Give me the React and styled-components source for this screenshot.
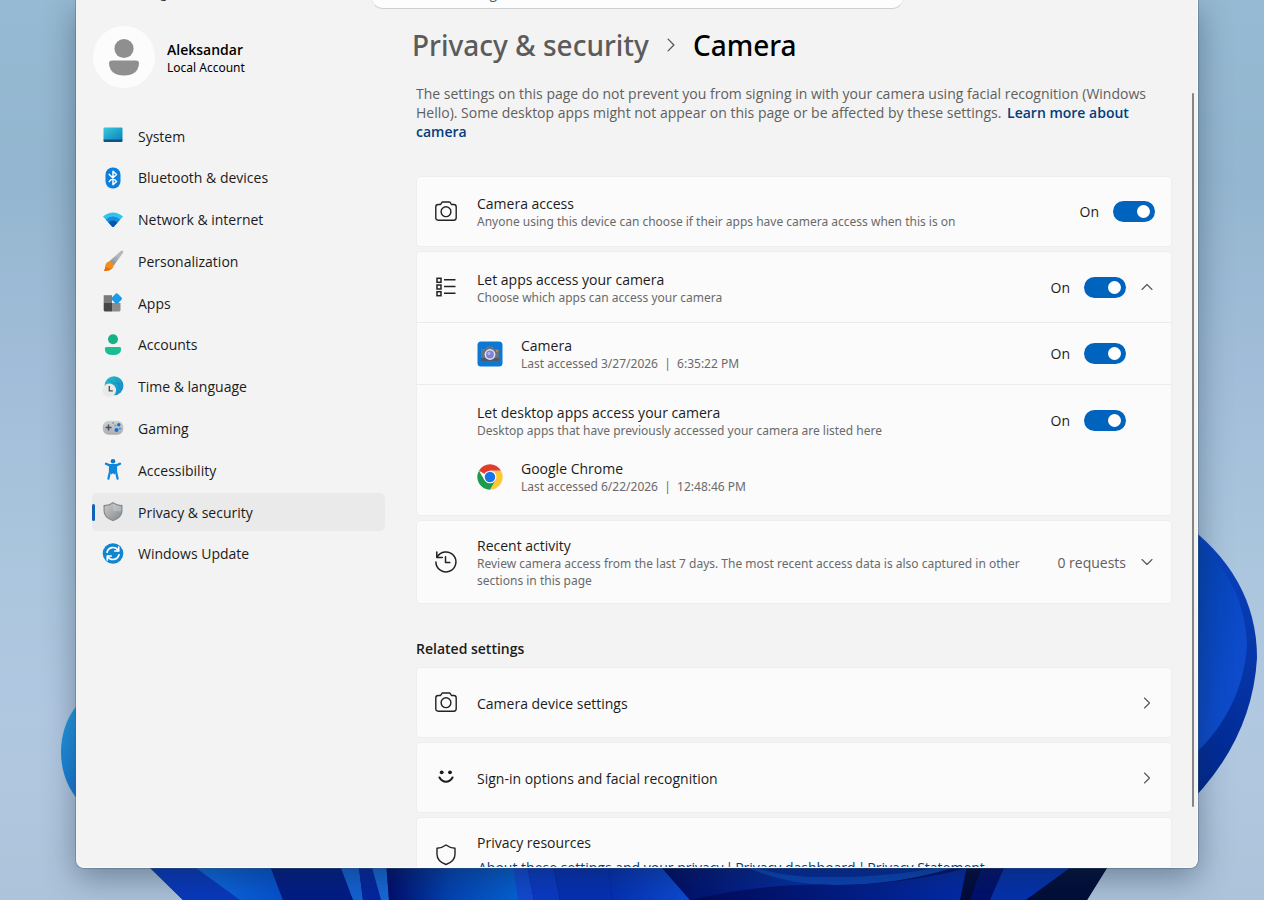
import React from 'react';
import styled, { createGlobalStyle } from 'styled-components';

const GlobalStyle = createGlobalStyle`
  *, *::before, *::after { box-sizing: border-box; }
  body {
    margin: 0;
    font-family: "Open Sans", "Noto Sans", sans-serif;
    font-size: 14px;
    line-height: 20px;
    color: #1b1b1b;
  }
  h1, h2, p, ul { margin: 0; padding: 0; }
  ul { list-style: none; }
  svg { display: block; flex: none; }
`;

const Desktop = styled.div`
  position: relative;
  height: 100vh;
  padding: 0 66px 32px 76px;
  overflow: hidden;
  background: linear-gradient(180deg, #96bad3 0%, #94b6d0 20%, #a2bdd9 42%, #a9c5dc 60%, #b1c8e1 80%, #adc3da 100%);
`;

const Wallpaper = styled.svg`
  position: absolute;
  inset: 0;
  width: 100%;
  height: 100%;
`;

const Window = styled.div`
  position: relative;
  display: flex;
  flex-direction: column;
  height: 100%;
  overflow: hidden;
  background: #f3f3f3;
  border: solid #fbfbfb;
  border-width: 0 1px 1px 0;
  border-radius: 0 0 8px 8px;
  box-shadow: 0 0 0 1px rgba(70, 90, 110, 0.35), 0 10px 32px rgba(20, 40, 60, 0.42);
`;

const TitleBar = styled.header`
  display: flex;
  align-items: flex-end;
  flex: none;
  height: 9px;
  overflow: hidden;
`;

const AppName = styled.span`
  width: 295px;
  flex: none;
  padding-left: 52px;
  margin-bottom: 5px;
  font-size: 12px;
`;

const SearchBox = styled.input`
  flex: 0 1 533px;
  min-width: 0;
  height: 34px;
  padding: 0 38px;
  border: 1px solid #e8e8e8;
  border-bottom: 1px solid #cfcfcf;
  border-radius: 12px;
  background: #fdfdfd;
  font: inherit;
  &::placeholder { color: #5c5c5c; opacity: 1; }
`;

const Body = styled.div`
  display: flex;
  flex: 1;
  min-height: 0;
`;

const Sidebar = styled.aside`
  flex: none;
  width: 336px;
  padding: 17px 27px 0 16px;
`;

const Profile = styled.div`
  display: flex;
  align-items: center;
  gap: 12px;
  margin: 0 0 29px 1px;
`;

const Avatar = styled.div`
  display: grid;
  place-items: center;
  width: 62px;
  height: 62px;
  border-radius: 50%;
  background: #fcfcfc;
`;

const ProfileText = styled.div`
  padding-top: 4px;
  line-height: 18px;
  color: #000;
`;

const ProfileName = styled.div`
  font-weight: 600;
`;

const ProfileKind = styled.div`
  font-family: "Noto Sans", sans-serif;
  font-size: 12px;
`;

const NavList = styled.ul`
  display: flex;
  flex-direction: column;
  justify-content: space-between;
  min-height: 456px;
`;

const NavLink = styled.a`
  position: relative;
  display: flex;
  align-items: center;
  gap: 15px;
  height: 38px;
  padding-left: 11px;
  border-radius: 5px;
  color: #1b1b1b;
  text-decoration: none;
  background: ${(p) => (p.$current ? '#eaeaea' : 'transparent')};
  &::before {
    content: "";
    display: ${(p) => (p.$current ? 'block' : 'none')};
    position: absolute;
    left: 0;
    width: 3px;
    height: 17px;
    border-radius: 2px;
    background: #0f63bd;
  }
`;

const NavLabel = styled.span`
  padding-top: 1px;
`;

const Main = styled.main`
  flex: 1;
  min-width: 0;
  padding: 16px 0 0 4px;
  overflow-y: auto;
  scrollbar-width: none;
`;

const ScrollTrack = styled.div`
  display: flex;
  justify-content: flex-end;
  flex: none;
  width: 25px;
  padding: 84px 3px 60px 0;
`;

const ScrollThumb = styled.div`
  width: 2px;
  border-radius: 1px;
  background: #858585;
`;

const Breadcrumb = styled.h1`
  display: flex;
  align-items: center;
  gap: 15px;
  margin: 0 0 19px -4px;
  font: 500 28px/40px "Noto Sans", sans-serif;
  color: #000;
`;

const Crumb = styled.a`
  color: #5b5b5b;
  text-decoration: none;
`;

const Intro = styled.p`
  margin-bottom: 35px;
  line-height: 19px;
  color: #5f5f5f;
`;

const LearnMore = styled.a`
  margin-left: 2px;
  font-weight: 600;
  color: #003e7e;
  text-decoration: none;
`;

const CardStack = styled.section`
  display: flex;
  flex-direction: column;
  gap: 4px;
`;

const Card = styled.div`
  border: 1px solid #eeeeee;
  border-radius: 4px;
  background: #fbfbfb;
`;

const Row = styled.div`
  display: flex;
  align-items: center;
  gap: 20px;
  width: 100%;
  min-height: ${(p) => p.$height || 69}px;
  padding: 0 ${(p) => p.$end || 18}px 0 18px;
`;

const LinkRow = styled(Row).attrs({ as: 'a' })`
  color: inherit;
  text-decoration: none;
`;

const ResourceRow = styled(Row)`
  padding-top: 14px;
  padding-bottom: 14px;
`;

const NestedRow = styled.div`
  display: flex;
  align-items: center;
  gap: 18px;
  min-height: ${(p) => p.$height || 37}px;
  padding: 0 45px 0 60px;
`;

const Section = styled.div`
  border-top: 1px solid #ebebeb;
`;

const DesktopApps = styled(Section)`
  display: flex;
  flex-direction: column;
  gap: 19px;
  padding: 17px 0 20px;
`;

const Text = styled.div`
  flex: 1;
  min-width: 0;
  padding-top: 2px;
`;

const Title = styled.div`
  line-height: 18px;
`;

const Detail = styled.div`
  font: 12px/17px "Noto Sans", sans-serif;
  color: #6a6a6a;
`;

const SwitchLabel = styled.label`
  display: flex;
  align-items: center;
  gap: 14px;
`;

const SwitchText = styled.span`
  padding-top: 1px;
`;

const SwitchInput = styled.input`
  appearance: none;
  display: flex;
  align-items: center;
  justify-content: ${(p) => (p.checked ? 'flex-end' : 'flex-start')};
  width: 42px;
  height: 21px;
  margin: 0;
  padding: 0 5px;
  border-radius: 11px;
  background: ${(p) => (p.checked ? '#0063bd' : '#8a8a8a')};
  &::before {
    content: "";
    width: 13px;
    height: 13px;
    border-radius: 50%;
    background: #fff;
  }
`;

const Trailing = styled.div`
  display: flex;
  align-items: center;
  gap: 15px;
`;

const RequestCount = styled.span`
  padding-top: 2px;
  color: #5f5f5f;
`;

const IconButton = styled.button`
  display: block;
  padding: 0;
  border: 0;
  background: none;
  color: inherit;
`;

const GroupHeading = styled.h2`
  margin: 35px 0 8px;
  font-size: 14px;
  font-weight: 600;
  line-height: 20px;
`;

const ResourceLinks = styled.div`
  display: flex;
  gap: 2px;
  margin-top: 6px;
  padding-left: 1px;
  color: #003e7e;
`;

const ResourceLink = styled.a`
  color: #003e7e;
  text-decoration: none;
`;

function Icon({ size = 22, children, ...rest }) {
  return (
    <svg width={size} height={size} viewBox={`0 0 ${size} ${size}`} fill="none" overflow="visible" aria-hidden="true" {...rest}>
      {children}
    </svg>
  );
}

const chevrons = {
  up: 'M1 8.500 L6 3.500 L11 8.500',
  down: 'M1 3.500 L6 8.500 L11 3.500',
  right: 'M3.500 1 L8.500 6 L3.500 11',
};

const Chevron = ({ to, size = 12, width = 1.1 }) => (
  <svg width={size} height={size} viewBox="0 0 12 12" fill="none" aria-hidden="true">
    <path d={chevrons[to]} stroke="#555" strokeWidth={width} strokeLinecap="round" strokeLinejoin="round" />
  </svg>
);

const CameraIcon = () => (
  <Icon stroke="#222" strokeWidth="1.4" strokeLinejoin="round">
    <path d="M3.200 3.500H5.600L6.700 1.700Q7.100 1 7.900 1H14.100Q14.900 1 15.300 1.700L16.400 3.500H18.800Q21.200 3.500 21.200 5.900V16.800Q21.200 19.200 18.800 19.200H3.200Q.8 19.200 .8 16.800V5.900Q.8 3.500 3.200 3.500Z" />
    <circle cx="11" cy="10.700" r="4.900" />
  </Icon>
);

const ListIcon = () => (
  <Icon stroke="#222" strokeWidth="1.5">
    <rect x="2" y="2.300" width="4" height="4" />
    <rect x="2" y="9" width="4" height="4" />
    <rect x="2" y="15.700" width="4" height="4" />
    <path d="M9 3.800H20.500M9 10.500H20.500M9 17.200H20.500" />
  </Icon>
);

const HistoryIcon = () => (
  <Icon stroke="#222" strokeWidth="1.5" strokeLinecap="round" strokeLinejoin="round">
    <path d="M2.100 6.200A10 10 0 1 1 .9 11" />
    <path d="M1.800 1V6.400H7.300" />
    <path d="M10.500 5.700V11.500H14.800" />
  </Icon>
);

const SmileIcon = () => (
  <Icon>
    <circle cx="6.700" cy="5.300" r="1.900" fill="#1b1b1b" />
    <circle cx="15" cy="5.300" r="1.900" fill="#1b1b1b" />
    <path d="M4.500 10.500Q7 14.800 11 14.800T17.500 10.500" stroke="#1b1b1b" strokeWidth="2.100" strokeLinecap="round" />
  </Icon>
);

const ShieldOutlineIcon = () => (
  <Icon stroke="#222" strokeWidth="1.400" strokeLinejoin="round">
    <path d="M11 1Q15 4 20 4.300V10.200Q20 17.200 11 20.500Q2 17.200 2 10.200V4.300Q7 4 11 1Z" />
  </Icon>
);

const CameraAppIcon = () => (
  <Icon size={26}>
    <rect x=".5" y=".5" width="25" height="25" rx="3.500" fill="#0a78d4" />
    <path d="M4 8H8.500L10 5.500H16L17.500 8H22V20H4Z" fill="#66727d" />
    <path d="M4 17H22V20H4Z" fill="#4f5a64" />
    <circle cx="13" cy="13.500" r="5.400" fill="#dfe2f0" />
    <circle cx="13" cy="13.500" r="3.900" fill="#7d83d8" />
    <circle cx="12" cy="12.500" r="1.400" fill="#b3bcf2" />
    <circle cx="20" cy="9.800" r=".9" fill="#e39a4e" />
  </Icon>
);

const ChromeIcon = () => (
  <svg width="26" height="26" viewBox="0 0 48 48" aria-hidden="true">
    <path d="M24 24 3.650 12.250A23.500 23.500 0 0 1 44.350 12.250L24 12.250Z" fill="#e33b2e" />
    <path d="M24 12.250H44.350A23.500 23.500 0 0 1 24 47.500L34.180 29.870Z" fill="#fcc934" />
    <path d="M3.650 12.250A23.500 23.500 0 0 0 24 47.500L34.180 29.870 13.820 29.870Z" fill="#1e9a4b" />
    <circle cx="24" cy="24" r="11.750" fill="#fff" />
    <circle cx="24" cy="24" r="9.700" fill="#1a73e8" />
  </svg>
);

const Gradient = ({ id, from, to, x2 = 0, y2 = 1 }) => (
  <linearGradient id={id} x1="0" y1="0" x2={x2} y2={y2}>
    <stop offset="0" stopColor={from} />
    <stop offset="1" stopColor={to} />
  </linearGradient>
);

const navIcons = {
  system: (
    <Icon size={20}>
      <Gradient id="sys" from="#35cbdc" to="#0f80bd" x2={1} />
      <path d="M.5 2.500Q.5 1.500 1.500 1.500H18.500Q19.500 1.500 19.500 2.500V14H.5Z" fill="url(#sys)" />
      <path d="M.5 13.500H19.500V15Q19.500 16 18.500 16H1.500Q.5 16 .5 15Z" fill="#0e5388" />
    </Icon>
  ),
  bluetooth: (
    <Icon size={20}>
      <rect x="2.500" y="-.5" width="15" height="21" rx="7.200" fill="#0b7fe0" />
      <path d="M5.800 6 13.500 13.500 10 16.800V3.200L13.500 6.500 5.800 14" stroke="#fff" strokeWidth="1.500" strokeLinejoin="round" />
    </Icon>
  ),
  network: (
    <Icon size={20}>
      <path d="M0 6.500Q10-1.500 20 6.500L11 16.500Q10 17.500 9 16.500Z" fill="#2fc3ee" />
      <path d="M2.800 9.500Q10 3.300 17.200 9.500L11 16.500Q10 17.500 9 16.500Z" fill="#168cdc" />
      <path d="M5.500 12.500Q10 8.500 14.500 12.500L11 16.500Q10 17.500 9 16.500Z" fill="#0b55ad" />
    </Icon>
  ),
  brush: (
    <Icon size={20}>
      <Gradient id="handle" from="#b4b8bc" to="#6c7176" x2={-0.6} />
      <path d="M19.700-.2Q20.800.8 19.700 2.300L10.800 14.500 6.300 10.300 17.500.3Q19-.8 19.700-.2Z" fill="url(#handle)" />
      <path d="M6.300 10.300Q10 11 10.800 14.500 9.500 20.500 .8 19.800 2.300 18.500 2.200 15.500 2.700 11.200 6.300 10.300Z" fill="#f48c1a" />
      <path d="M2.200 15.500Q4 17.500 8.500 17.700 5.500 20.300 .8 19.800 2.300 18.500 2.200 15.500Z" fill="#e66c12" />
    </Icon>
  ),
  apps: (
    <Icon size={20}>
      <path d="M.7 2.200H9V10H.7Z" fill="#7a7a7a" />
      <path d="M.7 10H9V18.500H1.700L.7 17.500Z" fill="#464646" />
      <path d="M9 10H17.500V17.500L16.500 18.500H9Z" fill="#8c8c8c" />
      <path d="M12.600.8Q13.700-.3 14.800.8L18.500 4.500Q19.600 5.600 18.500 6.700L14.800 10.400Q13.700 11.500 12.600 10.400L8.900 6.700Q7.800 5.600 8.900 4.500Z" fill="#1b9cea" />
    </Icon>
  ),
  accounts: (
    <Icon size={20}>
      <Gradient id="acc" from="#1fc08f" to="#17b99a" />
      <circle cx="10" cy="4.300" r="5" fill="#15b285" />
      <path d="M3.500 12H16.500Q18.200 12 18.200 13.700 18 20 10 20T1.800 13.700Q1.800 12 3.500 12Z" fill="url(#acc)" />
    </Icon>
  ),
  time: (
    <Icon size={20}>
      <Gradient id="globe" from="#25c4c2" to="#1584cf" x2={1} />
      <circle cx="11" cy="8.800" r="9.500" fill="url(#globe)" />
      <path d="M11 0Q17 5 17 12M5 3Q12 8 20 7" stroke="#0d78b8" strokeOpacity=".4" />
      <circle cx="6.300" cy="13.200" r="6.800" fill="#e9e9e9" />
      <path d="M6.300 9V13.800H9.800" stroke="#4a4a4a" strokeWidth="1.300" />
    </Icon>
  ),
  gaming: (
    <Icon size={20}>
      <Gradient id="pad" from="#cfd2d5" to="#a9adb2" />
      <rect x="-.3" y="1.800" width="20.600" height="14" rx="6" fill="url(#pad)" />
      <path d="M2.500 8.500H8.500M5.500 5.500V11.500" stroke="#4b5157" strokeWidth="1.500" />
      <path d="M9 4H11" stroke="#7b8188" strokeWidth="1.200" />
      <circle cx="15.800" cy="5.800" r="1.700" fill="#1272ca" />
      <circle cx="13.500" cy="11" r="2" fill="#1272ca" />
      <circle cx="17" cy="9.600" r="1.200" fill="#4d96da" />
      <circle cx="12.300" cy="6.500" r="1.100" fill="#6d9ed0" />
    </Icon>
  ),
  accessibility: (
    <Icon size={20}>
      <circle cx="10" cy="1.300" r="2.300" fill="#0b78d0" />
      <path d="M3 3.800Q5.500 5.300 8 5.500H12Q14.500 5.300 17 3.800" stroke="#1186da" strokeWidth="2.400" strokeLinecap="round" />
      <path d="M7 5H13V11.500L14.600 18.700M7 5V11.500L5.400 18.700" stroke="#1186da" strokeWidth="2.200" strokeLinecap="round" strokeLinejoin="round" />
      <path d="M7 5.500H13V12.500L11.500 14.500 10 13.300 8.500 14.500 7 12.500Z" fill="#1186da" />
    </Icon>
  ),
  shield: (
    <Icon size={20}>
      <Gradient id="sh" from="#c9cbcd" to="#85898c" x2={1} />
      <path d="M10 0Q14 3 19.500 3V9Q19.500 16 10 19.300.5 16 .5 9V3Q6 3 10 0Z" fill="#85898c" />
      <path d="M10 1.500Q13.800 4.100 18.300 4.200V9Q18.300 15.200 10 18 1.700 15.200 1.700 9V4.200Q6.200 4.100 10 1.500Z" fill="url(#sh)" />
      <path d="M10 1.500Q13.800 4.100 18.300 4.200V9.300H10Z" fill="#dadcdd" fillOpacity=".35" />
    </Icon>
  ),
  update: (
    <Icon size={20}>
      <circle cx="10" cy="9.500" r="10.300" fill="#0f86cf" />
      <path d="M4 8.200A6.200 6.200 0 0 1 15.300 6.500M16 10.800A6.200 6.200 0 0 1 4.700 12.500" stroke="#fff" strokeWidth="1.700" strokeLinecap="round" />
      <path d="M15.700 3.100V7H11.800M4.300 15.900V12H8.200" stroke="#fff" strokeWidth="1.700" strokeLinecap="round" strokeLinejoin="round" />
    </Icon>
  ),
};

const navItems = [
  ['system', 'System'],
  ['bluetooth', 'Bluetooth & devices'],
  ['network', 'Network & internet'],
  ['brush', 'Personalization'],
  ['apps', 'Apps'],
  ['accounts', 'Accounts'],
  ['time', 'Time & language'],
  ['gaming', 'Gaming'],
  ['accessibility', 'Accessibility'],
  ['shield', 'Privacy & security'],
  ['update', 'Windows Update'],
];

function Bloom() {
  return (
    <Wallpaper viewBox="0 0 1264 900" preserveAspectRatio="none" aria-hidden="true">
      <defs>
        <Gradient id="petalRight" from="#0b44c2" to="#00268c" />
        <linearGradient id="petalInner" gradientUnits="userSpaceOnUse" x1="1190" y1="600" x2="1250" y2="620">
          <stop offset="0" stopColor="#0444b6" />
          <stop offset="1" stopColor="#0d4bcb" />
        </linearGradient>
        <Gradient id="petalLeft" from="#27a0e2" to="#1672d2" />
        <linearGradient id="petalBright" gradientUnits="userSpaceOnUse" x1="200" y1="0" x2="285" y2="0">
          <stop offset="0" stopColor="#0d6ae0" />
          <stop offset="1" stopColor="#0450cf" />
        </linearGradient>
        <linearGradient id="petalMid" gradientUnits="userSpaceOnUse" x1="385" y1="0" x2="515" y2="0">
          <stop offset="0" stopColor="#000a6a" />
          <stop offset=".5" stopColor="#0343b4" />
          <stop offset="1" stopColor="#0560d4" />
        </linearGradient>
        <linearGradient id="fold" gradientUnits="userSpaceOnUse" x1="610" y1="0" x2="680" y2="0">
          <stop offset="0" stopColor="#042fb2" />
          <stop offset="1" stopColor="#0c48d2" />
        </linearGradient>
        <linearGradient id="hollow" gradientUnits="userSpaceOnUse" x1="660" y1="0" x2="800" y2="0">
          <stop offset="0" stopColor="#000a60" />
          <stop offset="1" stopColor="#042ea6" />
        </linearGradient>
        <linearGradient id="basin" gradientUnits="userSpaceOnUse" x1="700" y1="0" x2="960" y2="0">
          <stop offset="0" stopColor="#000a5c" />
          <stop offset="1" stopColor="#0329a8" />
        </linearGradient>
      </defs>
      <path d="M1180 520Q1257 575 1257 658 1252 745 1180 812Z" fill="url(#petalRight)" />
      <path d="M1180 525Q1245 575 1247 645 1242 718 1180 767Z" fill="url(#petalInner)" />
      <ellipse cx="110" cy="752" rx="49" ry="63" fill="url(#petalLeft)" />

      <path d="M140 858H1113L1087 900H183Z" fill="#010f6c" />
      <path d="M140 858H200L268 900H183Z" fill="#0838bd" />
      <path d="M185 860H268L283 900H240Z" fill="url(#petalBright)" />
      <path d="M268 860H342L352 900H283Z" fill="#001c86" />
      <path d="M338 860H358L363 900H353Z" fill="#1462d6" />
      <path d="M358 860H372L381 900H363Z" fill="#0425a0" />
      <path d="M370 860H386L389 900H381Z" fill="#1668da" />
      <path d="M386 860H515L520 900H389Z" fill="url(#petalMid)" />
      <path d="M512 860H526L534 900H518Z" fill="#1149d2" />
      <path d="M526 860H552L560 900H534Z" fill="#0a39c4" />
      <path d="M552 860H608L612 900H560Z" fill="#052fb4" />
      <path d="M608 860H655L690 900H612Z" fill="url(#fold)" />
      <path d="M655 860H745Q800 885 830 884 760 888 690 900Z" fill="url(#hollow)" />
      <path d="M740 864H965Q900 886 830 885 780 884 740 864Z" fill="#0a43b8" />
      <path d="M750 866H950Q880 878 830 877 785 878 750 866Z" fill="#032a9c" />
      <path d="M690 900Q770 882 840 885 910 884 975 866L962 900Z" fill="url(#basin)" />
      <path d="M967 866H982L970 900H960Z" fill="#000a3c" />
      <path d="M1004 868H1070L1026 900H990Z" fill="#0431ae" />
      <path d="M1070 868H1107L1087 900H1026Z" fill="#000d38" />
    </Wallpaper>
  );
}

function Switch({ name }) {
  const [on, setOn] = React.useState(true);
  return (
    <SwitchLabel>
      <SwitchText>{on ? 'On' : 'Off'}</SwitchText>
      <SwitchInput type="checkbox" role="switch" aria-label={name} checked={on} onChange={() => setOn(!on)} />
    </SwitchLabel>
  );
}

function Entry({ title, detail }) {
  return (
    <Text>
      <Title>{title}</Title>
      {detail && <Detail>{detail}</Detail>}
    </Text>
  );
}

export default function App() {
  return (
    <Desktop>
      <GlobalStyle />
      <Bloom />
      <Window>
        <TitleBar>
          <AppName>Settings</AppName>
          <SearchBox type="search" placeholder="Find a setting" aria-label="Find a setting" />
        </TitleBar>
        <Body>
          <Sidebar>
            <Profile>
              <Avatar>
                <svg width="30" height="38" viewBox="0 0 30 38" aria-hidden="true">
                  <circle cx="15" cy="10.500" r="9.600" fill="#8f8f8f" />
                  <path d="M3 22.500H27Q30 22.500 30 25.500 29 37.500 15 37.500T0 25.500Q0 22.500 3 22.500Z" fill="#8f8f8f" />
                </svg>
              </Avatar>
              <ProfileText>
                <ProfileName>Aleksandar</ProfileName>
                <ProfileKind>Local Account</ProfileKind>
              </ProfileText>
            </Profile>
            <nav aria-label="Settings">
              <NavList>
                {navItems.map(([icon, label]) => {
                  const current = icon === 'shield';
                  return (
                    <li key={icon}>
                      <NavLink href="#" $current={current} aria-current={current ? 'page' : undefined}>
                        {navIcons[icon]}
                        <NavLabel>{label}</NavLabel>
                      </NavLink>
                    </li>
                  );
                })}
              </NavList>
            </nav>
          </Sidebar>

          <Main>
            <Breadcrumb>
              <Crumb href="#">Privacy &amp; security</Crumb>
              <Chevron to="right" size={14} />
              <span>Camera</span>
            </Breadcrumb>
            <Intro>
              The settings on this page do not prevent you from signing in with your camera using facial recognition
              (Windows Hello). Some desktop apps might not appear on this page or be affected by these settings.{' '}
              <LearnMore href="#">Learn more about camera</LearnMore>
            </Intro>

            <CardStack>
              <Card>
                <Row $end={16}>
                  <CameraIcon />
                  <Entry
                    title="Camera access"
                    detail="Anyone using this device can choose if their apps have camera access when this is on"
                  />
                  <Switch name="Camera access" />
                </Row>
              </Card>

              <Card>
                <Row $height={70}>
                  <ListIcon />
                  <Entry title="Let apps access your camera" detail="Choose which apps can access your camera" />
                  <Trailing>
                    <Switch name="Let apps access your camera" />
                    <IconButton type="button" aria-label="Collapse">
                      <Chevron to="up" />
                    </IconButton>
                  </Trailing>
                </Row>
                <Section>
                  <NestedRow $height={61}>
                    <CameraAppIcon />
                    <Entry title="Camera" detail={'Last accessed 3/27/2026 \u00a0|\u00a0 6:35:22 PM'} />
                    <Switch name="Camera" />
                  </NestedRow>
                </Section>
                <DesktopApps>
                  <NestedRow>
                    <Entry
                      title="Let desktop apps access your camera"
                      detail="Desktop apps that have previously accessed your camera are listed here"
                    />
                    <Switch name="Let desktop apps access your camera" />
                  </NestedRow>
                  <NestedRow>
                    <ChromeIcon />
                    <Entry title="Google Chrome" detail={'Last accessed 6/22/2026 \u00a0|\u00a0 12:48:46 PM'} />
                  </NestedRow>
                </DesktopApps>
              </Card>

              <Card>
                <Row $height={82}>
                  <HistoryIcon />
                  <Entry
                    title="Recent activity"
                    detail="Review camera access from the last 7 days. The most recent access data is also captured in other sections in this page"
                  />
                  <Trailing>
                    <RequestCount>0 requests</RequestCount>
                    <IconButton type="button" aria-label="Expand">
                      <Chevron to="down" />
                    </IconButton>
                  </Trailing>
                </Row>
              </Card>
            </CardStack>

            <GroupHeading>Related settings</GroupHeading>
            <CardStack>
              <Card>
                <LinkRow href="#">
                  <CameraIcon />
                  <Entry title="Camera device settings" />
                  <Chevron to="right" />
                </LinkRow>
              </Card>
              <Card>
                <LinkRow href="#">
                  <SmileIcon />
                  <Entry title="Sign-in options and facial recognition" />
                  <Chevron to="right" />
                </LinkRow>
              </Card>
              <Card>
                <ResourceRow>
                  <ShieldOutlineIcon />
                  <Text>
                    <Title>Privacy resources</Title>
                    <ResourceLinks>
                      <ResourceLink href="#">About these settings and your privacy</ResourceLink>|
                      <ResourceLink href="#">Privacy dashboard</ResourceLink>|
                      <ResourceLink href="#">Privacy Statement</ResourceLink>
                    </ResourceLinks>
                  </Text>
                </ResourceRow>
              </Card>
            </CardStack>
          </Main>
          <ScrollTrack aria-hidden="true">
            <ScrollThumb />
          </ScrollTrack>
        </Body>
      </Window>
    </Desktop>
  );
}
